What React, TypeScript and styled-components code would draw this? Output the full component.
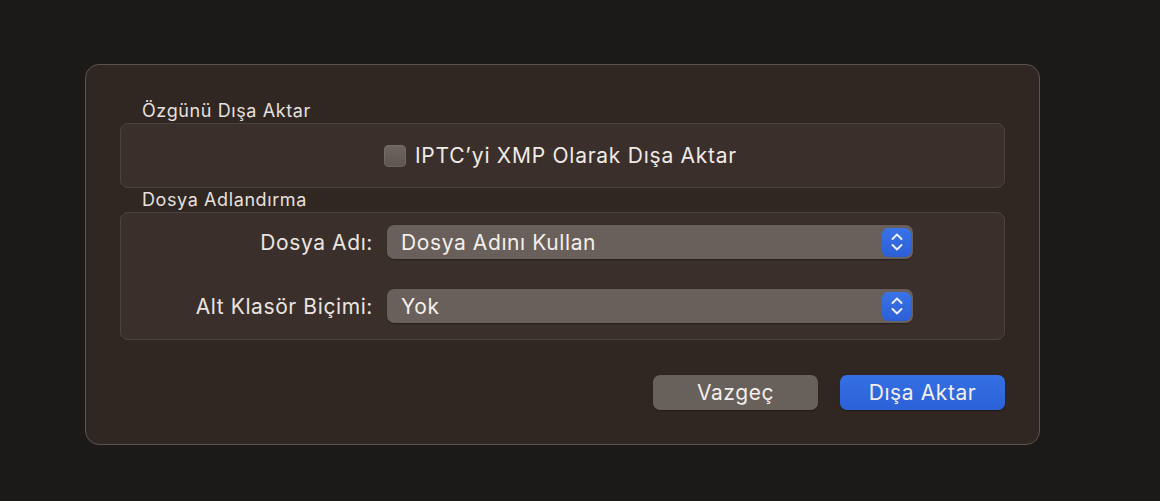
import React from "react";
import styled, { createGlobalStyle } from "styled-components";

const GlobalStyle = createGlobalStyle`
  html, body {
    margin: 0;
    padding: 0;
    background: #1c1a19;
    font-family: Inter, "Noto Sans", sans-serif;
    -webkit-font-smoothing: antialiased;
  }
`;

const Page = styled.div`
  width: 1160px;
  height: 501px;
  padding: 64px 0 0 85px;
  box-sizing: border-box;
`;

const Dialog = styled.div`
  width: 955px;
  height: 381px;
  box-sizing: border-box;
  background: #302622;
  border: 1px solid #5c534e;
  border-radius: 14px;
  padding: 34px 34px 0 34px;
  display: flex;
  flex-direction: column;
`;

const SectionTitle = styled.div`
  font-size: 18px;
  letter-spacing: 0.6px;
  color: #e6e0dc;
  padding-left: 22px;
  height: 24px;
  line-height: 24px;
`;

const GroupBox = styled.div<{ $height: number }>`
  height: ${(p) => p.$height}px;
  box-sizing: border-box;
  background: #3a2f2a;
  border: 1px solid #4d433e;
  border-radius: 8px;
`;

const CheckRow = styled.label`
  display: flex;
  align-items: center;
  justify-content: center;
  gap: 9px;
  height: 100%;
  font-size: 21px;
  letter-spacing: 0.75px;
  color: #f0eae6;
  padding-right: 4px;
`;

const CheckBox = styled.span`
  width: 22px;
  height: 22px;
  border-radius: 5px;
  background: linear-gradient(#6e6560, #5e5550);
  box-shadow: inset 0 0 0 0.5px #7d746f;
`;

const FormGrid = styled.div`
  display: grid;
  grid-template-columns: 252px 526px;
  column-gap: 14px;
  row-gap: 30px;
  align-items: center;
  padding-top: 12px;
`;

const FieldLabel = styled.div`
  font-size: 21px;
  letter-spacing: 0.6px;
  color: #ebe5e1;
  text-align: right;
`;

const Popup = styled.div`
  height: 34px;
  box-sizing: border-box;
  background: #6a605b;
  border-radius: 7px;
  box-shadow: 0 0.5px 1px rgba(0, 0, 0, 0.35);
  display: flex;
  align-items: center;
  justify-content: space-between;
  padding: 0 2px 0 14px;
  font-size: 21px;
  letter-spacing: 0.6px;
  color: #f4efeb;
`;

const Stepper = styled.span`
  width: 29px;
  height: 29px;
  border-radius: 6px;
  background: linear-gradient(#3a73e6, #2c5fd6);
  display: flex;
  align-items: center;
  justify-content: center;
`;

const ButtonRow = styled.div`
  display: flex;
  justify-content: flex-end;
  gap: 22px;
  margin-top: 35px;
`;

const Button = styled.button<{ $primary?: boolean }>`
  width: 165px;
  height: 35px;
  border: none;
  border-radius: 7px;
  font-family: inherit;
  font-size: 21px;
  letter-spacing: 0.6px;
  color: #f4efeb;
  background: ${(p) => (p.$primary ? "linear-gradient(#3570e4, #2c61d8)" : "#68605b")};
  box-shadow: 0 0.5px 1px rgba(0, 0, 0, 0.35);
`;

const Chevrons = () => (
  <svg width="14" height="20" viewBox="0 0 14 20" fill="none">
    <path d="M2.5 7 L7 2.5 L11.5 7" stroke="#e8eefc" strokeWidth="2" strokeLinecap="round" strokeLinejoin="round" />
    <path d="M2.5 13 L7 17.5 L11.5 13" stroke="#e8eefc" strokeWidth="2" strokeLinecap="round" strokeLinejoin="round" />
  </svg>
);

export default function App() {
  return (
    <>
      <GlobalStyle />
      <Page>
        <Dialog>
          <SectionTitle>Özgünü Dışa Aktar</SectionTitle>
          <GroupBox $height={65}>
            <CheckRow>
              <CheckBox />
              IPTC’yi XMP Olarak Dışa Aktar
            </CheckRow>
          </GroupBox>
          <SectionTitle>Dosya Adlandırma</SectionTitle>
          <GroupBox $height={128}>
            <FormGrid>
              <FieldLabel>Dosya Adı:</FieldLabel>
              <Popup>
                Dosya Adını Kullan
                <Stepper>
                  <Chevrons />
                </Stepper>
              </Popup>
              <FieldLabel>Alt Klasör Biçimi:</FieldLabel>
              <Popup>
                Yok
                <Stepper>
                  <Chevrons />
                </Stepper>
              </Popup>
            </FormGrid>
          </GroupBox>
          <ButtonRow>
            <Button>Vazgeç</Button>
            <Button $primary>Dışa Aktar</Button>
          </ButtonRow>
        </Dialog>
      </Page>
    </>
  );
}
